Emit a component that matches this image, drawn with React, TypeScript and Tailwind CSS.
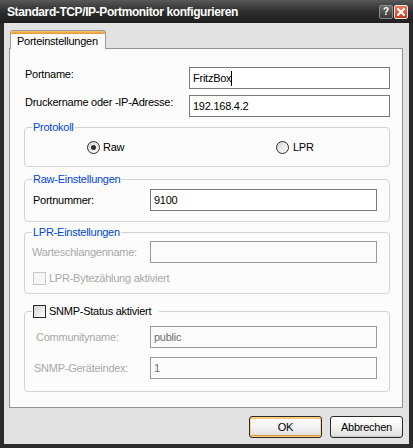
import React from 'react';

const FONT = "font-['Liberation_Sans',Arial,sans-serif]";

// small XP-style controls
const Radio = ({ checked }: { checked?: boolean }) => (
  <div className="w-[13px] h-[13px] rounded-full border border-[#2b2b2b] bg-linear-to-br from-[#d6d6d6] to-white flex items-center justify-center shrink-0">
    {checked && <div className="w-[5px] h-[5px] rounded-full bg-[#2e2e2e]" />}
  </div>
);

const Check = ({ disabled }: { disabled?: boolean }) => (
  <div
    className={
      disabled
        ? 'w-[13px] h-[13px] border border-[#c8c8c8] bg-[#f6f6f6] shrink-0'
        : 'w-[13px] h-[13px] border border-[#2b2b2b] bg-linear-to-br from-[#d2d2d2] to-white shrink-0'
    }
  />
);

const Field = ({
  children,
  disabled,
  width,
}: {
  children?: React.ReactNode;
  disabled?: boolean;
  width: string;
}) => (
  <div
    className={
      (disabled
        ? 'border-[#9a9a9a] bg-[#fbfbfb] text-[#6e6e6e] '
        : 'border-[#7a7a7a] bg-white text-black ') +
      width +
      ' h-[22px] border px-[3px] flex items-center text-[11px] shrink-0'
    }
  >
    {children}
  </div>
);

const GroupRow = ({
  label,
  value,
  disabled,
  labelPad,
}: {
  label: string;
  value?: string;
  disabled?: boolean;
  labelPad: string;
}) => (
  <div className="flex items-center">
    <div className={'w-[118px] ' + labelPad + (disabled ? ' text-[#a8a8a8]' : ' text-black')}>{label}</div>
    <Field width="w-[227px]" disabled={disabled}>
      {value}
    </Field>
  </div>
);

const Button = ({ label, primary }: { label: string; primary?: boolean }) => (
  <div
    className={
      'w-[73px] h-[22px] rounded-[3px] border border-[#2a2a2a] bg-linear-to-b from-white via-[#f3f3f3] to-[#dcdcdc] flex items-center justify-center text-[11px] text-black ' +
      (primary
        ? 'shadow-[inset_0_0_0_1px_#fbd38a,inset_0_-2px_0_0_#e5972c,inset_0_2px_0_0_#fbc56a]'
        : 'shadow-[inset_0_-1px_0_0_#c8c8c8]')
    }
  >
    {label}
  </div>
);

export default function App() {
  return (
    <div className={FONT + ' w-[413px] h-[448px] bg-[#2b2b2b] flex flex-col select-none'}>
      {/* title bar */}
      <div className="h-[23px] flex items-center pl-[7px] pr-[5px] bg-linear-to-b from-[#595959] via-[#2e2e2e] to-[#1f1f1f] shrink-0">
        <span className="flex-1 text-white font-bold text-[12px] tracking-[-0.4px] leading-none">
          Standard-TCP/IP-Portmonitor konfigurieren
        </span>
        <div className="flex gap-[1px]">
          <div className="w-[14px] h-[14px] rounded-[2px] border border-[#8a8a8a] bg-linear-to-b from-[#6c6c6c] to-[#3a3a3a] flex items-center justify-center text-white font-bold text-[10px] leading-none">
            ?
          </div>
          <div className="w-[14px] h-[14px] rounded-[2px] border border-[#e8e8e8] bg-linear-to-b from-[#ee7a5c] to-[#c93a1c] flex items-center justify-center">
            <svg width="8" height="8" viewBox="0 0 8 8">
              <path d="M1 1 L7 7 M7 1 L1 7" stroke="white" strokeWidth="2" strokeLinecap="square" />
            </svg>
          </div>
        </div>
      </div>

      {/* client area */}
      <div className="flex-1 mx-[4px] mb-[4px] bg-[#e2e2e2] flex flex-col pt-[7px] pl-[5px] pr-[6px] text-[11px] leading-[13px] tracking-[-0.25px]">
        {/* tab */}
        <div className="relative z-10 ml-[1px] -mb-[1px] w-[96px] h-[19px] rounded-t-[3px] border border-b-0 border-[#9a9a9a] bg-[#fcfcfc] flex flex-col overflow-hidden">
          <div className="h-[3px] bg-linear-to-b from-[#f9c36b] to-[#e6952b] shrink-0" />
          <div className="flex-1 flex items-center pl-[6px] text-black">Porteinstellungen</div>
        </div>

        {/* tab panel */}
        <div className="h-[360px] border border-[#919191] bg-[#fcfcfc] pl-[15px] pr-[12px] flex flex-col">
          <div className="mt-[18px] flex items-start">
            <div className="flex-1 mt-[1px]">Portname:</div>
            <Field width="w-[201px]">
              <span>FritzBox</span>
              <span className="w-[1px] h-[15px] bg-black" />
            </Field>
          </div>
          <div className="mt-[6px] flex items-start">
            <div className="flex-1 mt-[1px]">Druckername oder -IP-Adresse:</div>
            <Field width="w-[201px]">192.168.4.2</Field>
          </div>

          {/* Protokoll */}
          <fieldset className="mt-[4px] -ml-[1px] w-[366px] border border-[#d3d3d3] rounded-[4px] pl-[7px] pb-[12px]">
            <legend className="px-[1px] text-[#0046d5]">Protokoll</legend>
            <div className="mt-[7px] flex items-center h-[13px]">
              <div className="ml-[55px] w-[189px] flex items-center gap-[3px]">
                <Radio checked />
                <span>Raw</span>
              </div>
              <div className="flex items-center gap-[4px]">
                <Radio />
                <span>LPR</span>
              </div>
            </div>
          </fieldset>

          {/* Raw */}
          <fieldset className="mt-[6px] -ml-[1px] w-[366px] border border-[#d3d3d3] rounded-[4px] pl-[7px] pb-[10px]">
            <legend className="px-[1px] text-[#0046d5]">Raw-Einstellungen</legend>
            <div className="mt-[3px]">
              <GroupRow label="Portnummer:" value="9100" labelPad="pl-[1px]" />
            </div>
          </fieldset>

          {/* LPR */}
          <fieldset className="mt-[4px] -ml-[1px] w-[366px] border border-[#d3d3d3] rounded-[4px] pl-[7px] pb-[8px]">
            <legend className="px-[1px] text-[#0046d5]">LPR-Einstellungen</legend>
            <div className="mt-[2px]">
              <GroupRow label="Warteschlangenname:" disabled labelPad="" />
            </div>
            <div className="mt-[9px] flex items-center gap-[3px] pl-[1px] text-[#a8a8a8]">
              <Check disabled />
              <span>LPR-Bytezählung aktiviert</span>
            </div>
          </fieldset>

          {/* SNMP */}
          <fieldset className="mt-[11px] -ml-[1px] w-[366px] border border-[#d3d3d3] rounded-[4px] pl-[7px] pb-[12px]">
            <legend className="pl-[1px] pr-[8px]">
              <div className="flex items-center gap-[3px] h-[13px]">
                <Check />
                <span>SNMP-Status aktiviert</span>
              </div>
            </legend>
            <div className="mt-[8px]">
              <GroupRow label="Communityname:" value="public" disabled labelPad="pl-[4px]" />
            </div>
            <div className="mt-[9px]">
              <GroupRow label="SNMP-Geräteindex:" value="1" disabled labelPad="pl-[2px]" />
            </div>
          </fieldset>
        </div>

        {/* buttons */}
        <div className="mt-[8px] flex justify-end gap-[8px]">
          <Button label="OK" primary />
          <Button label="Abbrechen" />
        </div>
      </div>
    </div>
  );
}
